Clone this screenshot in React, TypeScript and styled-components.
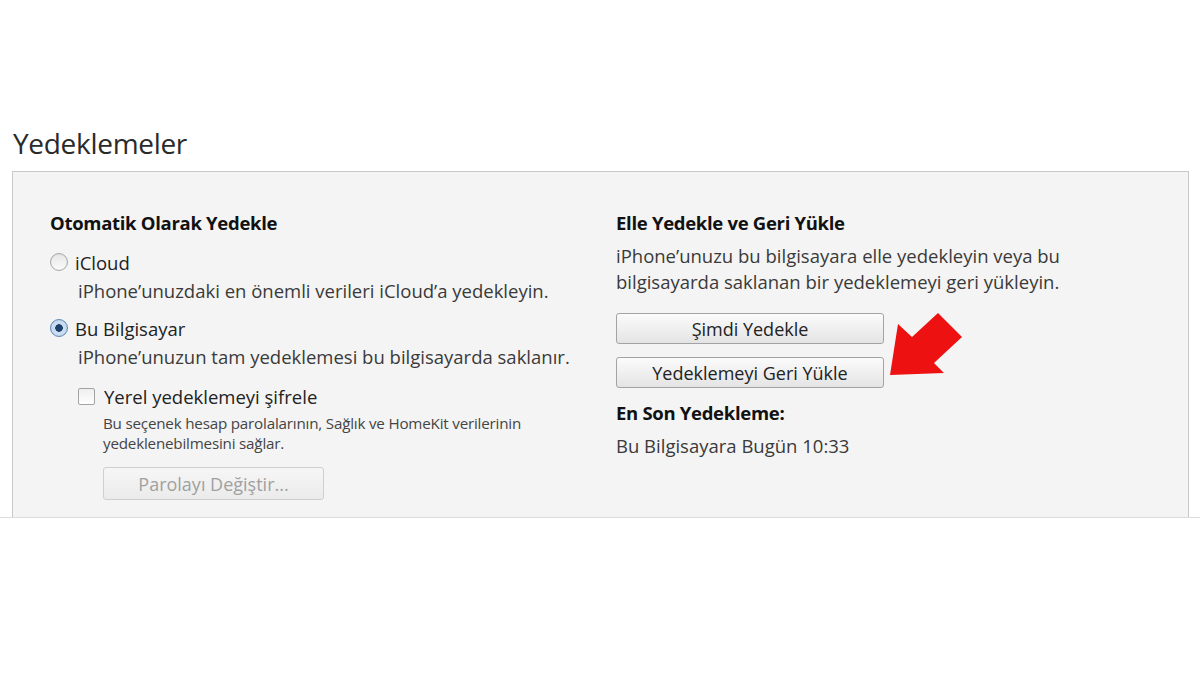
import React from 'react'
import styled, { createGlobalStyle } from 'styled-components'

const GlobalStyle = createGlobalStyle`
  html, body {
    margin: 0;
    padding: 0;
    background: #ffffff;
  }
  body {
    font-family: 'Open Sans', 'Noto Sans', sans-serif;
    color: #333333;
  }
`

const App = () => {
  return (
    <Page>
      <GlobalStyle />
      <Title>Yedeklemeler</Title>
      <PanelRow>
        <Panel>
          <Column>
            <Heading>Otomatik Olarak Yedekle</Heading>
            <OptionRow gap={15}>
              <Radio />
              <OptionLabel>iCloud</OptionLabel>
            </OptionRow>
            <Description>iPhone’unuzdaki en önemli verileri iCloud’a yedekleyin.</Description>
            <OptionRow gap={13}>
              <Radio checked />
              <OptionLabel>Bu Bilgisayar</OptionLabel>
            </OptionRow>
            <Description>iPhone’unuzun tam yedeklemesi bu bilgisayarda saklanır.</Description>
            <SubBlock>
              <OptionRow gap={15}>
                <Checkbox />
                <OptionLabel>Yerel yedeklemeyi şifrele</OptionLabel>
              </OptionRow>
              <SmallNote>
                Bu seçenek hesap parolalarının, Sağlık ve HomeKit verilerinin
                <br />
                yedeklenebilmesini sağlar.
              </SmallNote>
              <Button disabled width={221}>
                Parolayı Değiştir...
              </Button>
            </SubBlock>
          </Column>
          <Column>
            <Heading>Elle Yedekle ve Geri Yükle</Heading>
            <Paragraph>
              iPhone’unuzu bu bilgisayara elle yedekleyin veya bu
              <br />
              bilgisayarda saklanan bir yedeklemeyi geri yükleyin.
            </Paragraph>
            <ButtonStack>
              <Button width={268}>Şimdi Yedekle</Button>
              <ArrowWrap>
                <Button width={268}>Yedeklemeyi Geri Yükle</Button>
                <Arrow viewBox="0 0 80 70">
                  <polygon points="2,65 10,14 24,27 50,3 74,27 46,53 56,63" fill="#ee1111" />
                </Arrow>
              </ArrowWrap>
            </ButtonStack>
            <LastHeading>En Son Yedekleme:</LastHeading>
            <LastValue>Bu Bilgisayara Bugün 10:33</LastValue>
          </Column>
        </Panel>
      </PanelRow>
    </Page>
  )
}

export default App

const Page = styled.div`
  width: 1200px;
  height: 675px;
  padding-top: 126px;
  box-sizing: border-box;
  background: #ffffff;
`

const Title = styled.h1`
  margin: 0 0 11px 13px;
  font-size: 28px;
  line-height: 34px;
  font-weight: 400;
  color: #2a2a2a;
  letter-spacing: -0.3px;
`

const PanelRow = styled.div`
  border-bottom: 1px solid #dcdcdc;
  padding: 0 11px 0 12px;
`

const Panel = styled.section`
  display: grid;
  grid-template-columns: 566px 1fr;
  height: 346px;
  box-sizing: border-box;
  padding: 39px 0 0 37px;
  background: #f4f4f4;
  border: 1px solid #c9c9c9;
  border-bottom: none;
`

const Column = styled.div`
  display: flex;
  flex-direction: column;
`

const Heading = styled.h2`
  margin: 0;
  font-size: 18.5px;
  line-height: 24px;
  font-weight: 700;
  color: #111111;
  letter-spacing: -0.3px;
`

const OptionRow = styled.div<{ gap: number }>`
  display: flex;
  align-items: center;
  gap: 7px;
  height: 24px;
  margin-top: ${p => p.gap}px;
`

const OptionLabel = styled.span`
  font-size: 18.5px;
  color: #222222;
`

const Radio = styled.span<{ checked?: boolean }>`
  width: 18px;
  height: 18px;
  border-radius: 50%;
  box-sizing: border-box;
  border: 1px solid ${p => (p.checked ? '#5c88b8' : '#a9a9a9')};
  background: ${p =>
    p.checked
      ? 'radial-gradient(circle, #1d3f6e 0 3.5px, #c9dcf0 4px 100%)'
      : 'linear-gradient(#e6e6e6, #fbfbfb)'};
  box-shadow: inset 0 0 1px rgba(0, 0, 0, 0.15);
`

const Checkbox = styled.span`
  width: 17px;
  height: 17px;
  margin-right: 2px;
  border-radius: 2px;
  box-sizing: border-box;
  border: 1px solid #a3a3a3;
  background: linear-gradient(#eeeeee, #ffffff);
`

const Description = styled.p`
  margin: 5px 0 0 28px;
  font-size: 18.5px;
  line-height: 24px;
  color: #3a3a3a;
`

const SubBlock = styled.div`
  display: flex;
  flex-direction: column;
  margin-left: 28px;
`

const SmallNote = styled.p`
  margin: 5px 0 14px 25px;
  font-size: 15.2px;
  line-height: 20px;
  color: #444444;
  letter-spacing: -0.2px;
`

const Button = styled.button<{ width: number }>`
  width: ${p => p.width}px;
  height: ${p => (p.disabled ? '33px' : '31px')};
  margin-left: ${p => (p.disabled ? '25px' : '0')};
  padding: 0;
  font-family: 'Open Sans', 'Noto Sans', sans-serif;
  font-size: 18px;
  color: ${p => (p.disabled ? '#a0a0a0' : '#222222')};
  background: ${p =>
    p.disabled ? 'linear-gradient(#f6f6f6, #ebebeb)' : 'linear-gradient(#fbfbfb, #e4e4e4)'};
  border: 1px solid ${p => (p.disabled ? '#cfcfcf' : '#a3a3a3')};
  border-radius: 3px;
  text-align: center;
`

const Paragraph = styled.p`
  margin: 8px 0 18px;
  font-size: 18.5px;
  line-height: 26px;
  color: #3a3a3a;
`

const ButtonStack = styled.div`
  display: flex;
  flex-direction: column;
  gap: 13px;
`

const ArrowWrap = styled.div`
  position: relative;
  width: 268px;
`

const Arrow = styled.svg`
  position: absolute;
  left: 272px;
  top: -47px;
  width: 80px;
  height: 70px;
`

const LastHeading = styled.h3`
  margin: 13px 0 0;
  font-size: 18.5px;
  line-height: 24px;
  font-weight: 700;
  color: #111111;
  letter-spacing: -0.3px;
`

const LastValue = styled.p`
  margin: 9px 0 0;
  font-size: 18.5px;
  line-height: 24px;
  color: #3a3a3a;
`
